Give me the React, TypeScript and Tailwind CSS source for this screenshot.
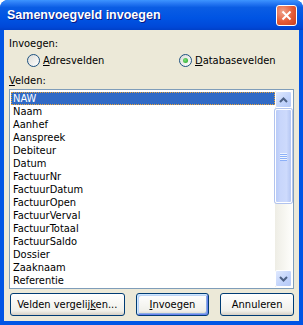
import React from 'react';

const fields = [
  'NAW',
  'Naam',
  'Aanhef',
  'Aanspreek',
  'Debiteur',
  'Datum',
  'FactuurNr',
  'FactuurDatum',
  'FactuurOpen',
  'FactuurVerval',
  'FactuurTotaal',
  'FactuurSaldo',
  'Dossier',
  'Zaaknaam',
  'Referentie',
];

const Radio: React.FC<{ checked?: boolean }> = ({ checked = false }) => (
  <span className="w-[13px] h-[13px] rounded-full border border-[#1C5180] bg-[linear-gradient(135deg,#DCDCD7,#FFFFFF)] flex items-center justify-center shrink-0">
    {checked && (
      <span className="w-[5px] h-[5px] rounded-full bg-[radial-gradient(circle_at_40%_40%,#7BE07B,#21A121)]" />
    )}
  </span>
);

interface XpButtonProps {
  children: React.ReactNode;
  width: string;
  isDefault?: boolean;
}

const XpButton: React.FC<XpButtonProps> = ({ children, width, isDefault = false }) => (
  <button
    className={
      isDefault
        ? `${width} h-[23px] rounded-[3px] border border-[#003C74] bg-[linear-gradient(to_bottom,#FFFFFF,#F0F0EA_80%,#D6D0C5)] shadow-[inset_1px_1px_0_#CEE7FF,inset_-1px_-1px_0_#6982EE,inset_2px_2px_0_#BCD4F6,inset_-2px_-2px_0_#89ADE4] text-[11px] text-black flex items-center justify-center`
        : `${width} h-[23px] rounded-[3px] border border-[#003C74] bg-[linear-gradient(to_bottom,#FFFFFF,#F0F0EA_80%,#D6D0C5)] text-[11px] text-black flex items-center justify-center`
    }
  >
    {children}
  </button>
);

const ScrollArrow: React.FC<{ down?: boolean }> = ({ down = false }) => (
  <div className="h-[17px] rounded-[2px] border border-white bg-[linear-gradient(135deg,#E0E9FE,#C1D3FB_60%,#B4C8F6)] flex items-center justify-center">
    <svg width="9" height="6" viewBox="0 0 9 6" className={down ? 'rotate-180' : ''}>
      <path d="M1 5 L4.5 1.5 L8 5" fill="none" stroke="#4D6185" strokeWidth="2" />
    </svg>
  </div>
);

export default function App() {
  return (
    <div className="w-[303px] h-[325px] flex flex-col rounded-t-[8px] overflow-hidden bg-[#0055E5] font-['DejaVu_Sans_Condensed','Liberation_Sans',Arial,sans-serif]">
      {/* title bar */}
      <div className="h-[30px] shrink-0 flex items-center justify-between pl-[7px] pr-[6px] bg-[linear-gradient(to_bottom,#3D95FF_0%,#2A7CF5_10%,#0A5DE4_25%,#0054E3_60%,#0048D8_90%,#0040C8_100%)]">
        <span className="text-white font-bold text-[12.5px] font-['Liberation_Sans',Arial,sans-serif] [text-shadow:1px_1px_0_#0A1883]">
          Samenvoegveld invoegen
        </span>
        <div className="w-[21px] h-[21px] rounded-[3px] border border-white bg-[radial-gradient(circle_at_30%_30%,#F0A28A,#E45A35_55%,#C8401F)] flex items-center justify-center">
          <svg width="11" height="11" viewBox="0 0 11 11">
            <path d="M1.5 1.5 L9.5 9.5 M9.5 1.5 L1.5 9.5" stroke="white" strokeWidth="2" />
          </svg>
        </div>
      </div>

      {/* body */}
      <div className="flex-1 mx-[4px] mb-[4px] bg-[#ECE9D8] flex flex-col pt-[7px] px-[5px] text-[11px] text-black leading-[13px]">
        <div>Invoegen:</div>
        <div className="flex items-center mt-[4px] h-[13px]">
          <div className="flex items-center gap-[3px] ml-[18px] w-[152px]">
            <Radio />
            <span>
              <span className="underline">A</span>dresvelden
            </span>
          </div>
          <div className="flex items-center gap-[3px]">
            <Radio checked />
            <span>
              <span className="underline">D</span>atabasevelden
            </span>
          </div>
        </div>
        <div className="mt-[7px]">
          <span className="underline">V</span>elden:
        </div>

        {/* list */}
        <div className="mt-[2px] h-[200px] w-[285px] border border-[#7F9DB9] bg-white p-[1px] flex">
          <div className="flex-1 flex flex-col pt-[1px]">
            {fields.map((field, index) => (
              <div
                key={field}
                className={
                  index === 0
                    ? 'h-[13px] pl-[1px] bg-[#316AC5] text-white border border-dotted border-[#E8A33A] leading-[11px]'
                    : 'h-[13px] pl-[2px] leading-[13px]'
                }
              >
                {field}
              </div>
            ))}
          </div>
          <div className="w-[17px] flex flex-col bg-[linear-gradient(to_right,#EEEDE5,#FEFEFB)]">
            <ScrollArrow />
            <div className="flex-1 py-[1px] flex flex-col">
              <div className="h-[94px] rounded-[2px] border border-white bg-[linear-gradient(to_right,#B9CBF8,#C8D6FB_30%,#CDDAFC_70%,#B4C6F3)] shadow-[0_0_0_1px_#B1C3EE] flex flex-col items-center justify-center gap-[1px]">
                <span className="w-[7px] h-[1px] bg-[#EEF4FE] shadow-[0_1px_0_#8CB0F8]" />
                <span className="w-[7px] h-[1px] bg-[#EEF4FE] shadow-[0_1px_0_#8CB0F8]" />
                <span className="w-[7px] h-[1px] bg-[#EEF4FE] shadow-[0_1px_0_#8CB0F8]" />
                <span className="w-[7px] h-[1px] bg-[#EEF4FE] shadow-[0_1px_0_#8CB0F8]" />
              </div>
            </div>
            <ScrollArrow down />
          </div>
        </div>

        {/* buttons */}
        <div className="mt-[4px] ml-[1px] flex gap-[11px]">
          <XpButton width="w-[115px]">
            <span>
              Velden vergelij<span className="underline">k</span>en...
            </span>
          </XpButton>
          <XpButton width="w-[74px]" isDefault>
            <span>
              <span className="underline">I</span>nvoegen
            </span>
          </XpButton>
          <XpButton width="w-[74px]">Annuleren</XpButton>
        </div>
      </div>
    </div>
  );
}
